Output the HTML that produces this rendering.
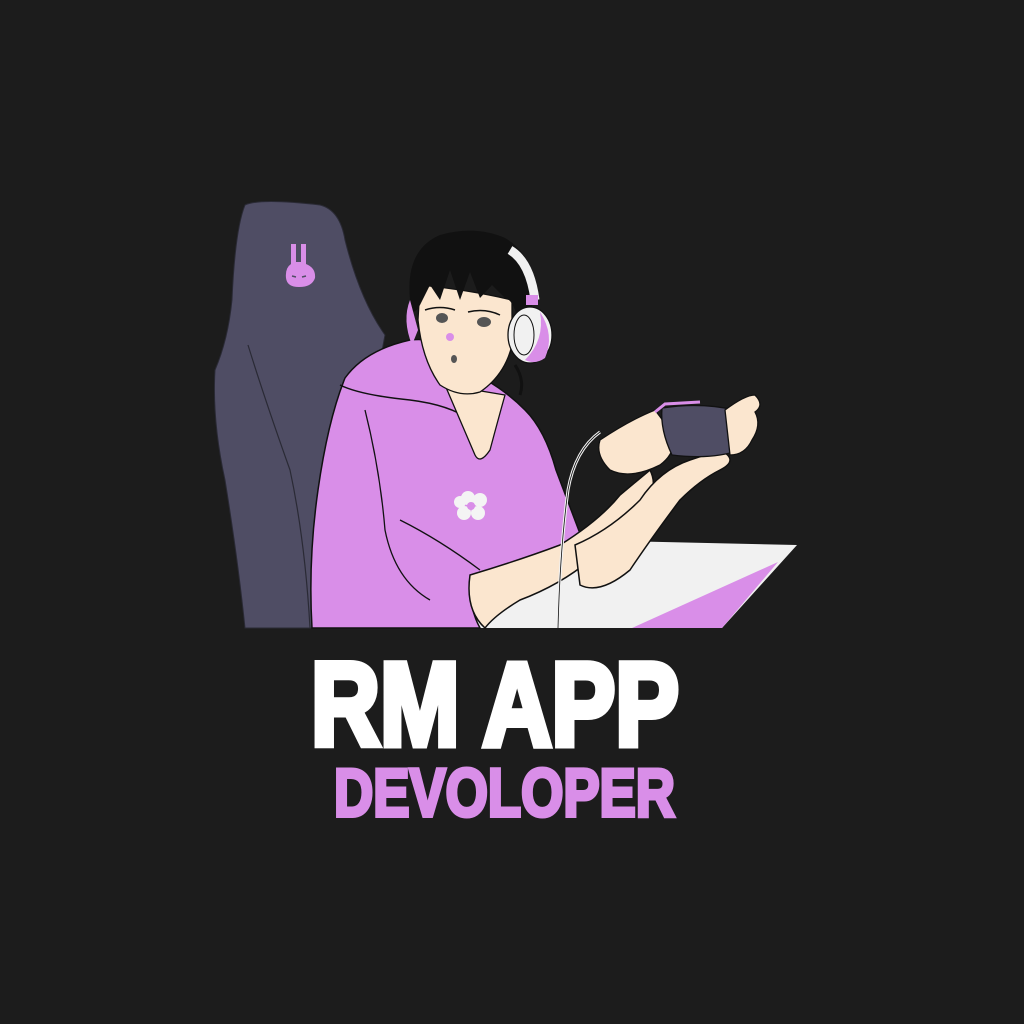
<!DOCTYPE html>
<html><head><meta charset="utf-8"><style>
html,body{margin:0;padding:0;background:#1c1c1c;width:1024px;height:1024px;overflow:hidden}
</style></head><body>
<svg width="1024" height="1024" viewBox="0 0 1024 1024" xmlns="http://www.w3.org/2000/svg">
<rect width="1024" height="1024" fill="#1c1c1c"/>
<path d="M245 205 Q260 198 320 205 Q340 210 345 240 Q360 300 385 335 L330 628 L245 628 Q238 560 225 480 Q212 420 215 370 Q228 340 232 300 Q235 230 245 205 Z" fill="#4f4d64" stroke="#2a2a35" stroke-width="1"/>
<path d="M248 345 Q265 400 290 470 Q305 540 310 628" fill="none" stroke="#2a2a35" stroke-width="1.2"/>
<path d="M291 244 L296 244 L296 262 L301 262 L301 244 L306 244 L306 264 Q316 268 315 278 Q312 287 299 287 Q287 287 286 278 Q285 268 291 264 Z" fill="#d98ee8"/>
<path d="M292 276 l4 1 M302 277 l4 -1" stroke="#4f4d64" stroke-width="1.5"/>
<polygon points="575,540 797,545 722,628 430,628" fill="#f1f1f1"/>
<polygon points="632,628 778,562 722,628" fill="#d98ee8"/>
<path d="M312 628 Q308 560 318 490 Q328 420 345 378 Q365 350 410 340 Q430 338 440 345 L470 372 Q500 385 525 410 Q545 430 556 470 Q575 520 590 560 Q560 575 520 580 L470 585 Q470 610 480 628 Z" fill="#d98ee8" stroke="#111" stroke-width="1.5"/>
<path d="M340 385 Q360 395 410 400 Q450 405 470 420" fill="none" stroke="#111" stroke-width="1.5"/>
<path d="M365 410 Q380 470 385 530 Q395 580 430 600" fill="none" stroke="#111" stroke-width="1.3"/>
<path d="M400 520 Q440 540 480 570" fill="none" stroke="#111" stroke-width="1.3"/>
<path d="M445 385 Q460 420 475 455 Q480 465 490 450 Q498 420 505 395 Z" fill="#fbe6cf" stroke="#111" stroke-width="1.3"/>
<g fill="#f4f4f4"><circle cx="468" cy="498" r="7"/><circle cx="480" cy="500" r="7"/><circle cx="478" cy="513" r="7"/><circle cx="464" cy="513" r="7"/><circle cx="460" cy="502" r="6"/></g>
<circle cx="471" cy="506" r="4" fill="#d98ee8"/>
<path d="M470 575 Q520 560 560 545 Q600 520 620 495 L650 470 Q660 490 640 505 Q610 535 590 560 Q560 585 520 600 Q495 615 485 628 Q465 610 470 575 Z" fill="#fbe6cf" stroke="#111" stroke-width="1.5"/>
<path d="M575 545 Q610 530 640 500 Q660 470 690 460 L720 450 Q740 460 720 470 Q700 480 680 500 Q650 540 630 570 Q600 595 580 585 Z" fill="#fbe6cf" stroke="#111" stroke-width="1.5"/>
<path d="M600 440 Q630 420 655 410 L670 430 Q680 450 660 465 Q630 480 610 470 Q595 455 600 440 Z" fill="#fbe6cf" stroke="#111" stroke-width="1.3"/>
<path d="M662 408 Q700 402 735 410 L740 450 Q712 460 672 455 Q660 430 662 408 Z" fill="#4f4d64" stroke="#111" stroke-width="1.3"/>
<path d="M655 412 L665 404 L700 402" fill="none" stroke="#d98ee8" stroke-width="3"/>
<path d="M725 410 Q745 395 755 395 Q765 405 755 412 Q762 425 752 440 Q745 455 730 455 Z" fill="#fbe6cf" stroke="#111" stroke-width="1.3"/>
<path d="M600 432 Q575 450 568 490 Q560 550 558 628" fill="none" stroke="#f1f1f1" stroke-width="3"/>
<path d="M600 432 Q575 450 568 490 Q560 550 558 628" fill="none" stroke="#111" stroke-width="0.8"/>
<path d="M420 285 Q470 290 512 300 L512 345 Q505 375 480 392 Q460 398 440 385 Q422 360 418 320 Z" fill="#fbe6cf" stroke="#111" stroke-width="1.3"/>
<path d="M410 300 Q405 250 440 235 Q475 225 505 238 Q535 255 535 300 L520 330 Q515 300 505 298 L492 285 L480 298 L470 272 L460 300 L450 270 L440 300 L430 285 L420 305 Q412 320 410 300 Z" fill="#111"/>
<path d="M515 365 Q525 380 520 395" fill="none" stroke="#111" stroke-width="3"/>
<ellipse cx="442" cy="318" rx="6" ry="5" fill="#555"/><ellipse cx="484" cy="322" rx="7" ry="5" fill="#555"/>
<path d="M425 310 Q440 305 455 310 M468 312 Q485 308 500 315" stroke="#111" stroke-width="1.5" fill="none"/>
<circle cx="450" cy="337" r="4" fill="#d98ee8"/>
<ellipse cx="454" cy="359" rx="3" ry="4" fill="#555"/>
<path d="M510 250 Q530 262 535 300" fill="none" stroke="#f1f1f1" stroke-width="9"/>
<rect x="526" y="295" width="12" height="10" fill="#d98ee8"/>
<ellipse cx="530" cy="335" rx="22" ry="28" fill="#f1f1f1" stroke="#111" stroke-width="1.3"/>
<path d="M540 312 Q555 335 545 358 Q535 365 525 360 Q545 340 540 312 Z" fill="#d98ee8"/>
<ellipse cx="524" cy="335" rx="10" ry="20" fill="none" stroke="#111" stroke-width="1"/>
<path d="M410 300 Q402 320 412 345 L418 330 Z" fill="#d98ee8"/>
<text x="311" y="745" font-family="Liberation Sans, sans-serif" font-weight="bold" font-size="118" fill="#ffffff" stroke="#ffffff" stroke-width="7" stroke-linejoin="miter" textLength="368" lengthAdjust="spacingAndGlyphs">RM APP</text>
<text x="334" y="816" font-family="Liberation Sans, sans-serif" font-weight="bold" font-size="68" fill="#d98ee8" stroke="#d98ee8" stroke-width="4" textLength="341" lengthAdjust="spacingAndGlyphs">DEVOLOPER</text>
</svg>
</body></html>
